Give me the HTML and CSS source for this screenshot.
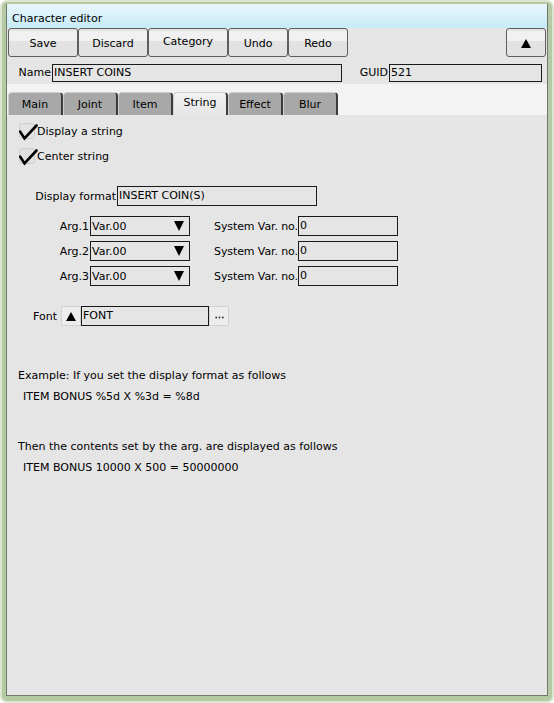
FILE: index.html
```html
<!DOCTYPE html>
<html>
<head>
<meta charset="utf-8">
<link rel="stylesheet" href="styles.css">
</head>
<body>
<div class="window">
  <div class="inner">
    <div class="titlebar">Character editor</div>
    <div class="toolbar">
      <button class="btn w70">Save</button>
      <button class="btn w70">Discard</button>
      <button class="btn w80 up1">Category</button>
      <button class="btn w60">Undo</button>
      <button class="btn w60">Redo</button>
      <div class="spacer"></div>
      <button class="btn w40"><svg class="tri" width="10" height="9" viewBox="0 0 10 9"><path d="M5 0 L10 9 L0 9 Z"/></svg></button>
    </div>
    <div class="namerow">
      <span class="lbl lbl-name">Name</span><div class="field f-name">INSERT COINS</div>
      <span class="lbl lbl-guid">GUID</span><div class="field f-guid">521</div>
    </div>
    <div class="tabstrip">
      <div class="tab">Main</div>
      <div class="tab">Joint</div>
      <div class="tab">Item</div>
      <div class="tab active">String</div>
      <div class="tab">Effect</div>
      <div class="tab">Blur</div>
    </div>
    <div class="panel">
      <div class="check-row">
        <span class="cbox"><svg class="mark" width="20" height="18" viewBox="0 0 20 18"><path d="M1 8.5 L5.5 15.5 L17.5 2.5"/></svg></span>
        <span class="check-label">Display a string</span>
      </div>
      <div class="check-row second">
        <span class="cbox"><svg class="mark" width="20" height="18" viewBox="0 0 20 18"><path d="M1 8.5 L5.5 15.5 L17.5 2.5"/></svg></span>
        <span class="check-label">Center string</span>
      </div>

      <div class="form-row fmt">
        <span class="lbl lbl-fmt">Display format</span><div class="field f-fmt">INSERT COIN(S)</div>
      </div>

      <div class="form-row arg first">
        <span class="lbl lbl-arg">Arg.1</span>
        <div class="select"><span>Var.00</span><svg class="tri" width="10" height="10" viewBox="0 0 10 10"><path d="M0 0 L10 0 L5 10 Z"/></svg></div>
        <span class="lbl-sys">System Var. no.</span><div class="field f-sys">0</div>
      </div>
      <div class="form-row arg">
        <span class="lbl lbl-arg">Arg.2</span>
        <div class="select"><span>Var.00</span><svg class="tri" width="10" height="10" viewBox="0 0 10 10"><path d="M0 0 L10 0 L5 10 Z"/></svg></div>
        <span class="lbl-sys">System Var. no.</span><div class="field f-sys">0</div>
      </div>
      <div class="form-row arg">
        <span class="lbl lbl-arg">Arg.3</span>
        <div class="select"><span>Var.00</span><svg class="tri" width="10" height="10" viewBox="0 0 10 10"><path d="M0 0 L10 0 L5 10 Z"/></svg></div>
        <span class="lbl-sys">System Var. no.</span><div class="field f-sys">0</div>
      </div>

      <div class="form-row font">
        <span class="lbl lbl-font">Font</span>
        <div class="sbtn"><svg class="tri" width="10" height="9" viewBox="0 0 10 9"><path d="M5 0 L10 9 L0 9 Z"/></svg></div>
        <div class="field f-font">FONT</div>
        <div class="sbtn dots"><svg width="9" height="3" viewBox="0 0 9 3"><circle cx="1.2" cy="1.5" r="0.9"/><circle cx="4.5" cy="1.5" r="0.9"/><circle cx="7.8" cy="1.5" r="0.9"/></svg></div>
      </div>

      <div class="text t1">Example: If you set the display format as follows</div>
      <div class="text sub">ITEM BONUS %5d X %3d = %8d</div>
      <div class="text t2">Then the contents set by the arg. are displayed as follows</div>
      <div class="text sub">ITEM BONUS 10000 X 500 = 50000000</div>
    </div>
  </div>
</div>
</body>
</html>
```

FILE: styles.css
```css
html, body {
  margin: 0;
  padding: 0;
}
body {
  width: 554px;
  height: 703px;
  overflow: hidden;
  font-family: "DejaVu Sans", sans-serif;
  font-size: 11px;
  color: #000;
  background: #ffffff;
}
.window {
  box-sizing: border-box;
  width: 554px;
  height: 703px;
  background: #b4c9a4;
  border: 2px solid #dbe6d1;
  border-radius: 7px;
  padding: 2px 4px 5px 4px;
  display: flex;
}
.inner {
  flex: 1;
  display: flex;
  flex-direction: column;
  border: 1px solid #6e7866;
  border-top: none;
  background: #e5e5e5;
  min-width: 0;
}
.titlebar {
  box-sizing: border-box;
  height: 24px;
  line-height: 19px;
  padding-top: 5px;
  padding-left: 5px;
  background: linear-gradient(#eaf7fb, #c6ebf8);
  font-size: 11px;
}
.toolbar {
  display: flex;
  height: 29px;
  padding-left: 1px;
  padding-right: 1px;
  background: #e5e5e5;
}
.spacer { flex: 1; }
.btn {
  box-sizing: border-box;
  height: 29px;
  margin: 0;
  padding: 0;
  border: 1px solid #5e5e5e;
  border-radius: 3px;
  background: linear-gradient(#e4e4e4 0, #e4e4e4 2px, #f1f1f1 2px, #f1f1f1 12px, #e2e2e2 12px);
  font-family: inherit;
  font-size: 11px;
  color: #000;
  display: flex;
  align-items: center;
  justify-content: center;
  padding-top: 1px;
}
.btn.up1 { padding-top: 0; padding-bottom: 2px; }
.w70 { width: 70px; }
.w80 { width: 80px; }
.w60 { width: 60px; }
.w40 { width: 40px; }
.tri { display: block; fill: #000; }

.namerow {
  box-sizing: border-box;
  height: 27px;
  padding-top: 7px;
  display: flex;
  align-items: flex-start;
}
.lbl {
  text-align: right;
  white-space: nowrap;
  line-height: 18px;
}
.lbl-name { width: 44px; padding-right: 1px; }
.lbl-guid { width: 46px; padding-right: 1px; }
.field {
  box-sizing: border-box;
  height: 18px;
  border: 1px solid #1a1a1a;
  background: #e5e5e5;
  line-height: 16px;
  padding-left: 1px;
  white-space: nowrap;
}
.f-name { width: 290px; }
.f-guid { width: 153px; }

.tabstrip {
  box-sizing: border-box;
  height: 31px;
  padding-top: 8px;
  padding-left: 1px;
  background: #f3f3f3;
  display: flex;
}
.tab {
  box-sizing: border-box;
  width: 55px;
  height: 23px;
  background: #a8a8a8;
  border-top: 1px solid #cfcfcf;
  border-left: 1px solid #cfcfcf;
  border-right: 2px solid #3c3c3c;
  border-radius: 4px 4px 0 0;
  text-align: center;
  line-height: 24px;
}
.tab.active {
  background: linear-gradient(#f2f2f2, #e6e6e6);
  line-height: 20px;
}

.panel {
  flex: 1;
  background: #e5e5e5;
  padding: 7px 0 0 11px;
}
.check-row {
  display: flex;
  align-items: center;
  height: 17px;
  margin-left: 1px;
}
.check-row.second { margin-top: 8px; }
.cbox {
  position: relative;
  box-sizing: border-box;
  width: 16px;
  height: 16px;
  border: 1px solid #cdcdcd;
  border-radius: 3px;
  background: #e2e2e2;
  flex: none;
}
.mark {
  position: absolute;
  left: -1px;
  top: -1px;
  fill: none;
  stroke: #000;
  stroke-width: 2.6;
  stroke-linecap: round;
  stroke-linejoin: miter;
}
.check-label {
  margin-left: 2px;
  line-height: 17px;
  padding-top: 1px;
}

.form-row {
  display: flex;
  align-items: center;
  height: 20px;
}
.form-row > .lbl, .form-row > .lbl-sys { padding-top: 1px; }
.form-row.fmt { margin-top: 22px; }
.form-row.arg { margin-top: 5px; }
.form-row.arg.first { margin-top: 10px; }
.form-row.font { margin-top: 20px; }
.lbl-fmt { width: 99px; padding-right: 1px; box-sizing: border-box; }
.f-fmt { width: 200px; height: 20px; line-height: 18px; }
.lbl-arg { width: 72px; padding-right: 1px; box-sizing: border-box; }
.select {
  box-sizing: border-box;
  width: 100px;
  height: 20px;
  border: 1px solid #1a1a1a;
  background: #e5e5e5;
  display: flex;
  align-items: center;
  justify-content: space-between;
  padding: 0 5px 0 1px;
}
.lbl-sys {
  margin-left: 24px;
  width: 84px;
  white-space: nowrap;
  letter-spacing: -0.1px;
}
.f-sys { width: 100px; height: 20px; line-height: 18px; }
.lbl-font { width: 43px; padding-right: 4px; box-sizing: border-box; }
.sbtn {
  box-sizing: border-box;
  width: 20px;
  height: 20px;
  background: #ededed;
  border: 1px solid #d2d2d2;
  display: flex;
  align-items: center;
  justify-content: center;
}
.sbtn.dots svg {
  display: block;
  fill: #333;
  margin-top: 2px;
}
.f-font { width: 128px; height: 20px; line-height: 18px; }

.text {
  height: 20px;
  line-height: 20px;
  padding-top: 1px;
  white-space: nowrap;
}
.text.t1 { margin-top: 39px; }
.text.t2 { margin-top: 29px; }
.text.sub { padding-left: 5px; }
```
